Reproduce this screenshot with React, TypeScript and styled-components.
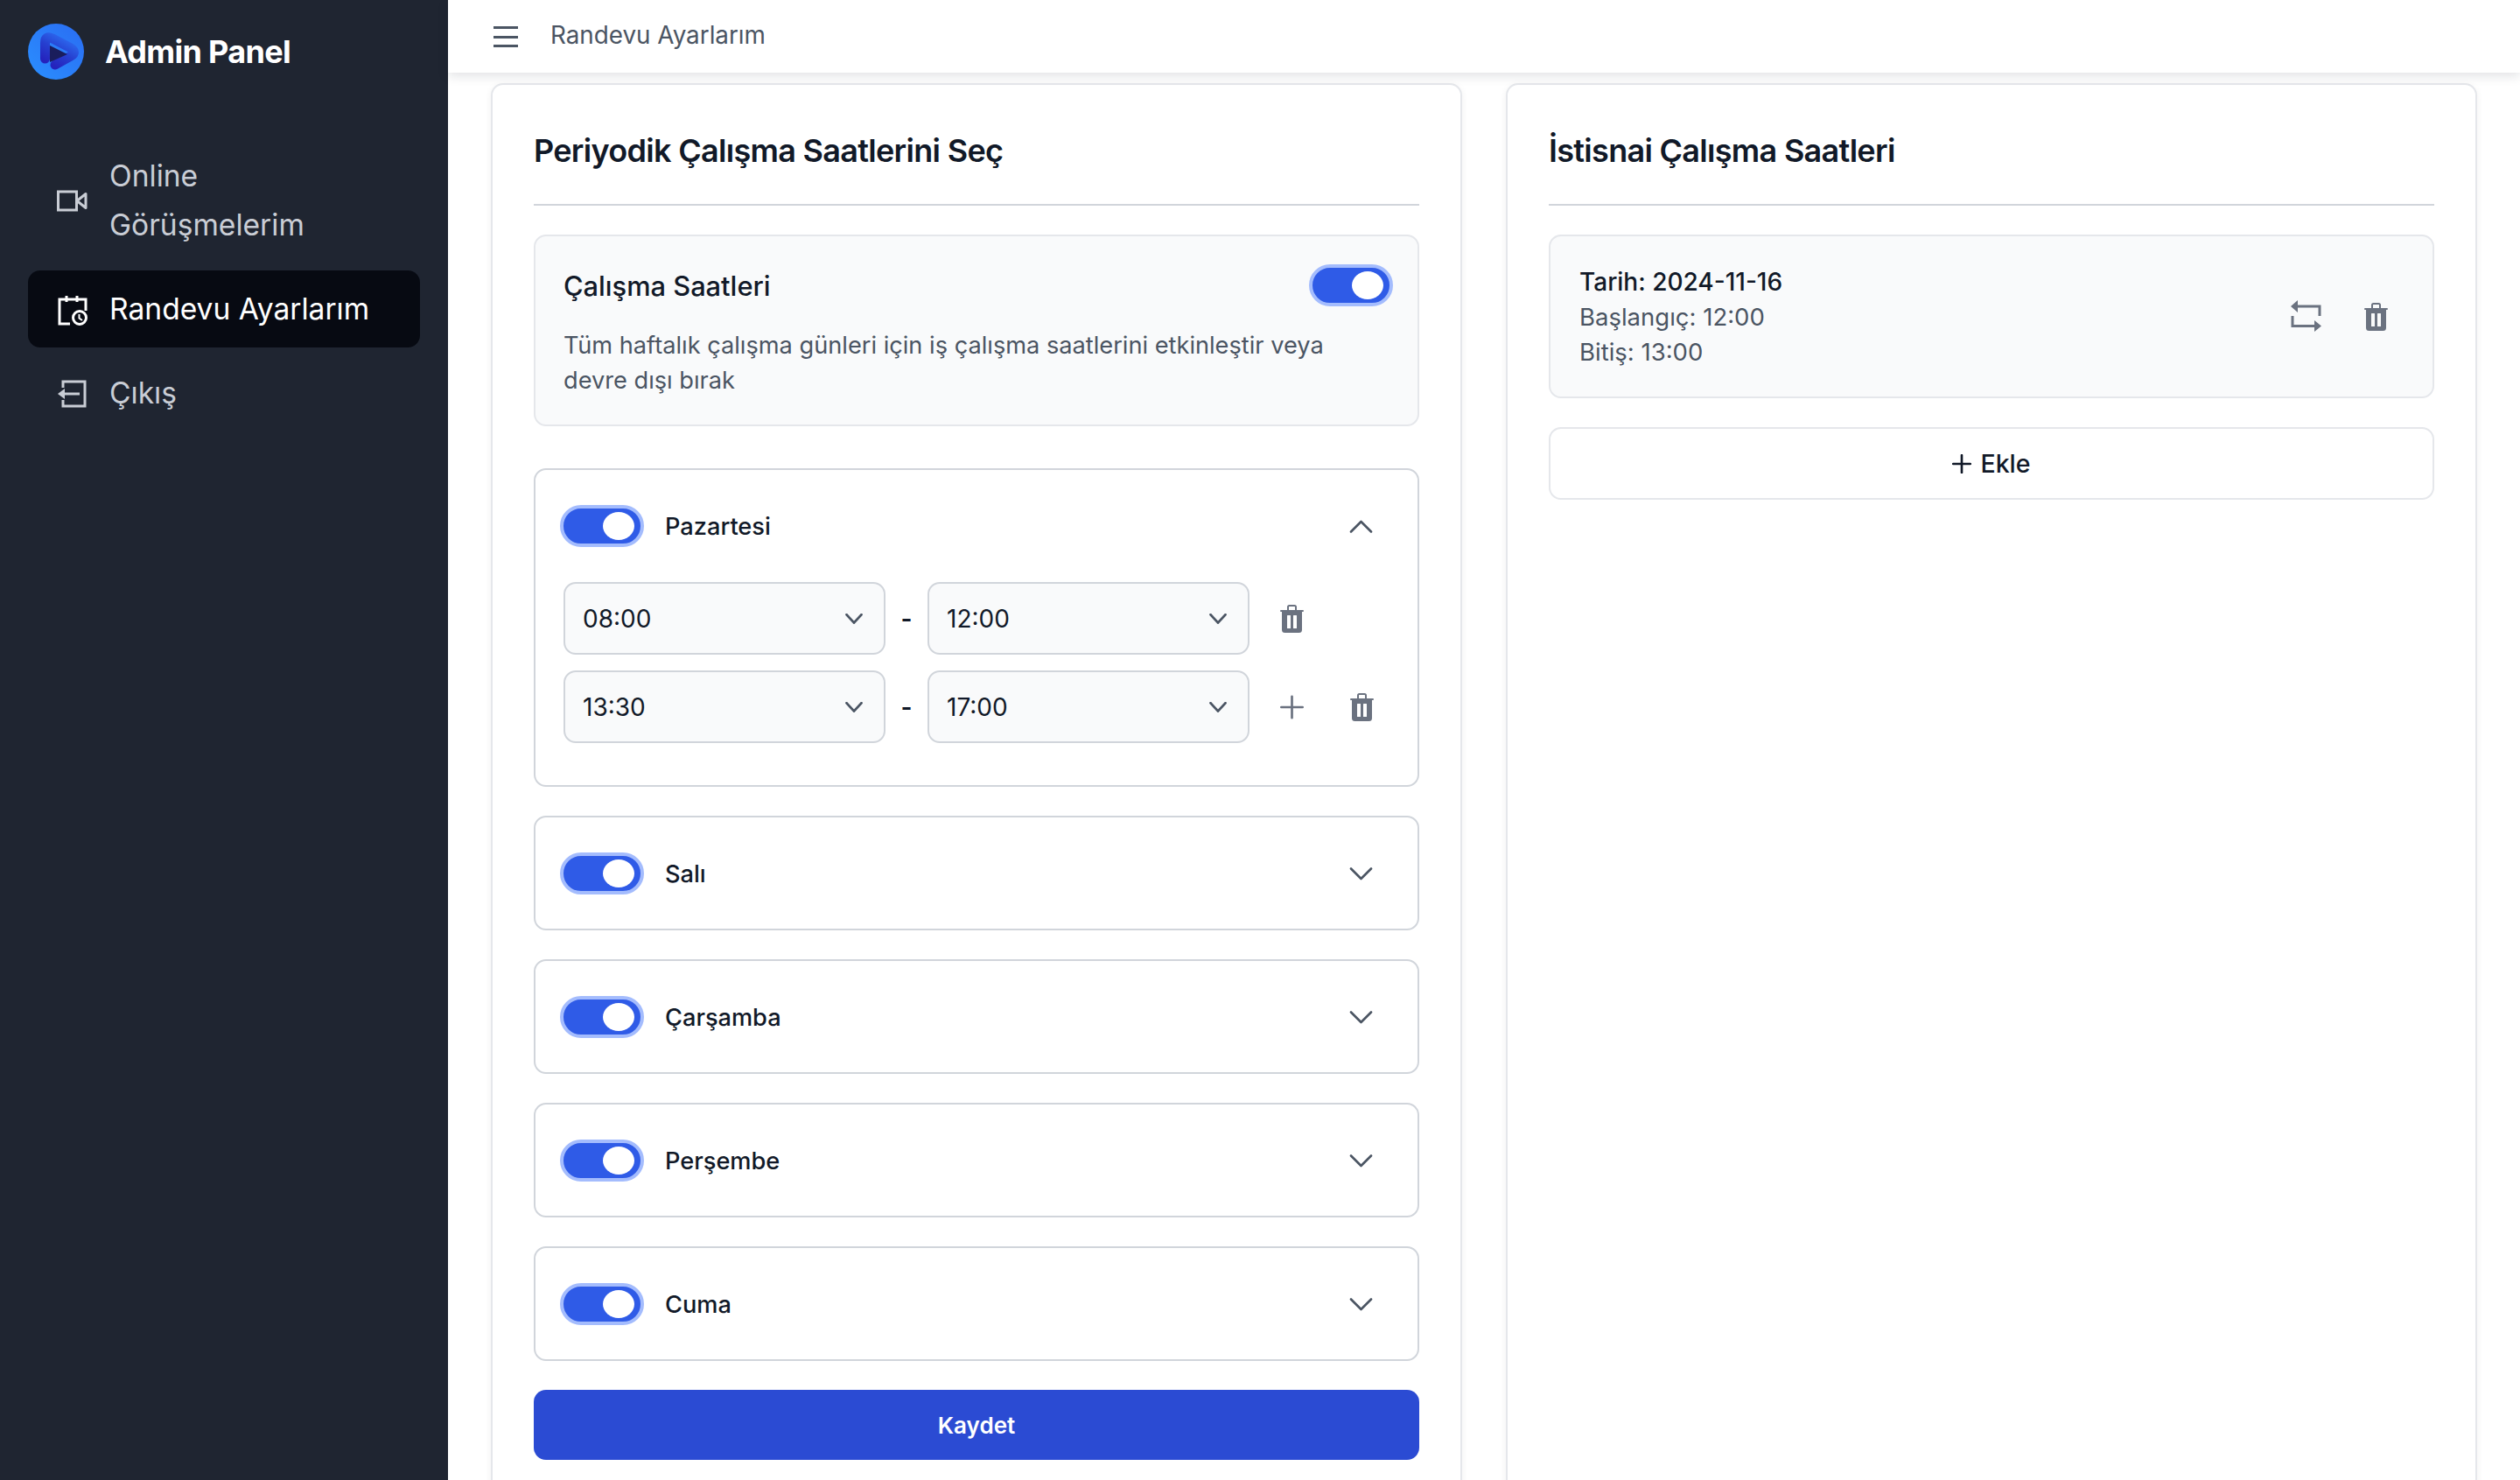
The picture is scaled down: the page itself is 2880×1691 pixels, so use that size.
import styled, { createGlobalStyle } from 'styled-components';

const GlobalStyle = createGlobalStyle`
  * {
    box-sizing: border-box;
  }

  html,
  body {
    margin: 0;
    height: 100%;
    overflow: hidden;
    background: #fff;
    font-family: Inter, "Noto Sans", sans-serif;
    color: #111928;
  }
`;

const Shell = styled.div`
  display: flex;
  height: 100vh;
  overflow: hidden;
`;

const Sidebar = styled.aside`
  flex: 0 0 512px;
  background: #1f2531;
  padding: 27px 32px 0;
`;

const Brand = styled.div`
  display: flex;
  align-items: center;
  gap: 24px;
  height: 64px;
  margin-bottom: 66px;
`;

const BrandName = styled.span`
  color: #fff;
  font-size: 36px;
  font-weight: 700;
  letter-spacing: -0.7px;
`;

const Nav = styled.nav`
  display: flex;
  flex-direction: column;
  gap: 8px;
`;

const NavItem = styled.a<{ $active?: boolean }>`
  display: flex;
  align-items: center;
  gap: 24px;
  padding: 16px 32px;
  border-radius: 14px;
  font-size: 33.6px;
  line-height: 56px;
  color: ${(p) => (p.$active ? '#fff' : '#c9cdd5')};
  background: ${(p) => (p.$active ? '#070a12' : 'transparent')};
`;

const NavIcon = styled.svg`
  flex: 0 0 37px;
  width: 37px;
  height: 37px;
`;

const Main = styled.div`
  flex: 1;
  min-width: 0;
  display: flex;
  flex-direction: column;
`;

const TopBar = styled.header`
  position: relative;
  z-index: 2;
  flex: 0 0 83px;
  display: flex;
  align-items: flex-start;
  gap: 37px;
  padding: 30px 0 0 52px;
  background: #fff;
  box-shadow: 0 4px 12px rgba(17, 25, 40, 0.12);
`;

const Hamburger = styled.div`
  display: flex;
  flex-direction: column;
  justify-content: space-between;
  width: 28px;
  height: 24px;

  span {
    display: block;
    height: 3px;
    background: #4b5563;
  }
`;

const PageName = styled.span`
  font-size: 27.8px;
  line-height: 20px;
  color: #4b5563;
`;

const Content = styled.main`
  flex: 1;
  min-height: 0;
  display: grid;
  grid-template-columns: 1fr 1fr;
  gap: 50px;
  padding: 12px 49px 0;
`;

const Card = styled.section`
  height: 1640px;
  padding: 48px 47px 0;
  background: #fff;
  border: 2px solid #e5e7eb;
  border-radius: 14px;
  box-shadow: 0 2px 8px rgba(17, 25, 40, 0.06);
`;

const CardTitle = styled.h2`
  margin: 0;
  height: 90px;
  font-size: 36px;
  line-height: 54px;
  font-weight: 600;
  letter-spacing: -0.7px;
  border-bottom: 2px solid #d1d5db;
`;

const GrayBox = styled.div`
  margin-top: 33px;
  background: #f9fafb;
  border: 2px solid #e5e7eb;
  border-radius: 14px;
`;

const SummaryBox = styled(GrayBox)`
  padding: 32px;
  height: 219px;
`;

const SummaryHead = styled.div`
  display: flex;
  justify-content: space-between;
  align-items: center;
  margin-bottom: 25px;
`;

const SummaryTitle = styled.span`
  font-size: 30.8px;
  font-weight: 500;
`;

const SummaryToggle = styled.span`
  margin-right: -4px;
`;

const SummaryText = styled.p`
  margin: 0;
  width: 900px;
  font-size: 27.2px;
  line-height: 40px;
  color: #4b5563;
`;

const Toggle = styled.span`
  position: relative;
  flex: 0 0 96px;
  display: block;
  width: 96px;
  height: 48px;
  background: #2f5be7;
  border: 4px solid #a4bcfd;
  border-radius: 24px;

  &::after {
    content: '';
    position: absolute;
    top: 4px;
    right: 7px;
    width: 36px;
    height: 32px;
    background: #fff;
    border-radius: 50%;
  }
`;

const DayCard = styled.div<{ $open?: boolean; $first?: boolean }>`
  margin-top: ${(p) => (p.$first ? '48px' : '33px')};
  padding: 40px 32px ${(p) => (p.$open ? '48px' : '39px')};
  background: #fff;
  border: 2px solid #d1d5db;
  border-radius: 14px;
`;

const DayHead = styled.div`
  display: flex;
  align-items: center;
  gap: 24px;
  padding-right: 19px;
  margin-left: -4px;
  height: 48px;
`;

const DayName = styled.span`
  flex: 1;
  font-size: 27.2px;
  font-weight: 500;
`;

const Slots = styled.div`
  display: flex;
  flex-direction: column;
  gap: 18px;
  margin-top: 40px;
`;

const Slot = styled.div`
  display: flex;
  align-items: center;
`;

const TimeSelect = styled.div`
  display: flex;
  align-items: center;
  justify-content: space-between;
  width: 368px;
  height: 83px;
  padding: 1px 24px 0 20px;
  background: #f9fafb;
  border: 2px solid #d1d5db;
  border-radius: 14px;
  font-size: 28px;
`;

const Dash = styled.span`
  flex: 0 0 48px;
  text-align: center;
  font-size: 28px;
  font-weight: 600;
`;

const SlotActions = styled.div`
  display: flex;
  align-items: center;
  gap: 53px;
  margin-left: 35px;
`;

const ActionSlot = styled.span`
  display: flex;
  justify-content: center;
  width: 27px;
`;

const SaveButton = styled.button`
  display: block;
  width: 100%;
  height: 80px;
  margin-top: 33px;
  border: 0;
  border-radius: 14px;
  background: #2b4bd3;
  color: #fff;
  font-family: inherit;
  font-size: 26px;
  font-weight: 600;
`;

const ExceptionBox = styled(GrayBox)`
  display: flex;
  align-items: center;
  justify-content: space-between;
  height: 187px;
  padding: 0 33px;
`;

const ExceptionDate = styled.div`
  font-size: 28px;
  line-height: 40px;
  font-weight: 500;
`;

const ExceptionLine = styled.div`
  font-size: 27.5px;
  line-height: 40px;
  color: #4b5563;
`;

const ExceptionActions = styled.div`
  display: flex;
  align-items: center;
  gap: 49px;
  margin-right: 18px;
`;

const AddButton = styled.button`
  display: flex;
  align-items: center;
  justify-content: center;
  gap: 10px;
  width: 100%;
  height: 83px;
  margin-top: 33px;
  background: #fff;
  border: 2px solid #e5e7eb;
  border-radius: 14px;
  font-family: inherit;
  font-size: 28.5px;
  font-weight: 500;
  color: #111928;
`;

const Logo = () => (
  <svg width="64" height="64" viewBox="0 0 64 64" style={{ flex: '0 0 64px' }}>
    <defs>
      <linearGradient id="disc" x1="0" y1="1" x2="1" y2="0">
        <stop offset="0" stopColor="#2a8fff" />
        <stop offset="1" stopColor="#2a6cf2" />
      </linearGradient>
      <linearGradient id="band" x1="0.8" y1="0" x2="0.2" y2="1">
        <stop offset="0" stopColor="#2d6df2" />
        <stop offset="0.5" stopColor="#2640d0" />
        <stop offset="1" stopColor="#2522bc" />
      </linearGradient>
    </defs>
    <circle cx="32" cy="32" r="32" fill="url(#disc)" />
    <path
      d="M19.500 40V22Q19.500 13 28 17L49 28Q56 33 49 37L31 47"
      fill="none"
      stroke="url(#band)"
      strokeWidth="11"
      strokeLinecap="round"
    />
    <path d="M25 25L45 35L25 44Z" fill="#1a1d5c" />
  </svg>
);

const VideoIcon = () => (
  <NavIcon viewBox="0 0 37 37" fill="none" stroke="#c9cdd5" strokeWidth="3">
    <rect x="2.5" y="8" width="21" height="21" />
    <path d="M24 18.5L34 10.5V26.5Z" strokeLinejoin="round" />
  </NavIcon>
);

const CalendarClockIcon = () => (
  <NavIcon viewBox="0 0 37 37" fill="none" stroke="#fff" strokeWidth="3">
    <path d="M16 35H4V7H34V20" />
    <path d="M12 3V10M24 3V10" />
    <circle cx="27" cy="28" r="7.5" />
    <path d="M26.500 24V28.500L30 31" strokeWidth="2" />
  </NavIcon>
);

const LogoutIcon = () => (
  <NavIcon viewBox="0 0 37 37" fill="none" stroke="#c9cdd5" strokeWidth="3">
    <path d="M8 12V5H33V33H8V26" />
    <path d="M27 19H8" />
    <path d="M2 19L10 13V25Z" fill="#c9cdd5" stroke="none" />
  </NavIcon>
);

const Chevron = ({ up, small }: { up?: boolean; small?: boolean }) => (
  <svg
    width={small ? 20 : 27}
    height={small ? 12 : 15}
    viewBox="0 0 27 15"
    fill="none"
    stroke="#4b5563"
    strokeWidth={small ? 3.6 : 2.6}
    strokeLinecap="round"
    strokeLinejoin="round"
    preserveAspectRatio="none"
  >
    <path d={up ? 'M2 13.5L13.5 2L25 13.5' : 'M2 1.5L13.5 13L25 1.5'} />
  </svg>
);

const TrashIcon = () => (
  <svg width="27" height="33" viewBox="0 0 27 33">
    <path
      fillRule="evenodd"
      fill="#6b7280"
      d="M8 7V3.500Q8 1 10.500 1H16.500Q19 1 19 3.500V7H26Q27 7 27 8T26 9H25V29.500Q25 33 21.500 33H5.500Q2 33 2 29.500V9H1Q0 9 0 8T1 7ZM10 7H17V3.500Q17 3 16.500 3H10.500Q10 3 10 3.500ZM8.500 13Q8 13 8 13.500V27.500Q8 28 8.500 28H11.500Q12 28 12 27.500V13.500Q12 13 11.500 13ZM15.500 13Q15 13 15 13.500V27.500Q15 28 15.500 28H18.500Q19 28 19 27.500V13.500Q19 13 18.500 13Z"
    />
  </svg>
);

const PlusIcon = ({ size = 30, color = '#6b7280', weight = 3 }: { size?: number; color?: string; weight?: number }) => (
  <svg width={size} height={size} viewBox="0 0 30 30" fill="none" stroke={color} strokeWidth={weight} strokeLinecap="round">
    <path d="M15 1.500V28.500M1.500 15H28.500" />
  </svg>
);

const SwapIcon = () => (
  <svg width="35" height="37" viewBox="0 0 35 37">
    <path d="M33 18V7H8M2 18V29.500H27" fill="none" stroke="#6b7280" strokeWidth="3" />
    <path d="M0 7L8 0V14Z M35 29.500L27 23V36Z" fill="#6b7280" />
  </svg>
);

const Time = ({ value }: { value: string }) => (
  <TimeSelect>
    {value}
    <Chevron small />
  </TimeSelect>
);

const days = ['Salı', 'Çarşamba', 'Perşembe', 'Cuma'];

export default function App() {
  return (
    <Shell>
      <GlobalStyle />
      <Sidebar>
        <Brand>
          <Logo />
          <BrandName>Admin Panel</BrandName>
        </Brand>
        <Nav>
          <NavItem>
            <VideoIcon />
            <span>Online Görüşmelerim</span>
          </NavItem>
          <NavItem $active>
            <CalendarClockIcon />
            <span>Randevu Ayarlarım</span>
          </NavItem>
          <NavItem>
            <LogoutIcon />
            <span>Çıkış</span>
          </NavItem>
        </Nav>
      </Sidebar>

      <Main>
        <TopBar>
          <Hamburger>
            <span />
            <span />
            <span />
          </Hamburger>
          <PageName>Randevu Ayarlarım</PageName>
        </TopBar>

        <Content>
          <Card>
            <CardTitle>Periyodik Çalışma Saatlerini Seç</CardTitle>
            <SummaryBox>
              <SummaryHead>
                <SummaryTitle>Çalışma Saatleri</SummaryTitle>
                <SummaryToggle>
                  <Toggle />
                </SummaryToggle>
              </SummaryHead>
              <SummaryText>
                Tüm haftalık çalışma günleri için iş çalışma saatlerini etkinleştir veya devre dışı bırak
              </SummaryText>
            </SummaryBox>

            <DayCard $open $first>
              <DayHead>
                <Toggle />
                <DayName>Pazartesi</DayName>
                <Chevron up />
              </DayHead>
              <Slots>
                <Slot>
                  <Time value="08:00" />
                  <Dash>-</Dash>
                  <Time value="12:00" />
                  <SlotActions>
                    <ActionSlot>
                      <TrashIcon />
                    </ActionSlot>
                  </SlotActions>
                </Slot>
                <Slot>
                  <Time value="13:30" />
                  <Dash>-</Dash>
                  <Time value="17:00" />
                  <SlotActions>
                    <ActionSlot>
                      <PlusIcon />
                    </ActionSlot>
                    <ActionSlot>
                      <TrashIcon />
                    </ActionSlot>
                  </SlotActions>
                </Slot>
              </Slots>
            </DayCard>

            {days.map((day) => (
              <DayCard key={day}>
                <DayHead>
                  <Toggle />
                  <DayName>{day}</DayName>
                  <Chevron />
                </DayHead>
              </DayCard>
            ))}

            <SaveButton>Kaydet</SaveButton>
          </Card>

          <Card>
            <CardTitle>İstisnai Çalışma Saatleri</CardTitle>
            <ExceptionBox>
              <div>
                <ExceptionDate>Tarih: 2024-11-16</ExceptionDate>
                <ExceptionLine>Başlangıç: 12:00</ExceptionLine>
                <ExceptionLine>Bitiş: 13:00</ExceptionLine>
              </div>
              <ExceptionActions>
                <SwapIcon />
                <TrashIcon />
              </ExceptionActions>
            </ExceptionBox>
            <AddButton>
              <PlusIcon size={22} color="#111928" weight={3.6} />
              Ekle
            </AddButton>
          </Card>
        </Content>
      </Main>
    </Shell>
  );
}
